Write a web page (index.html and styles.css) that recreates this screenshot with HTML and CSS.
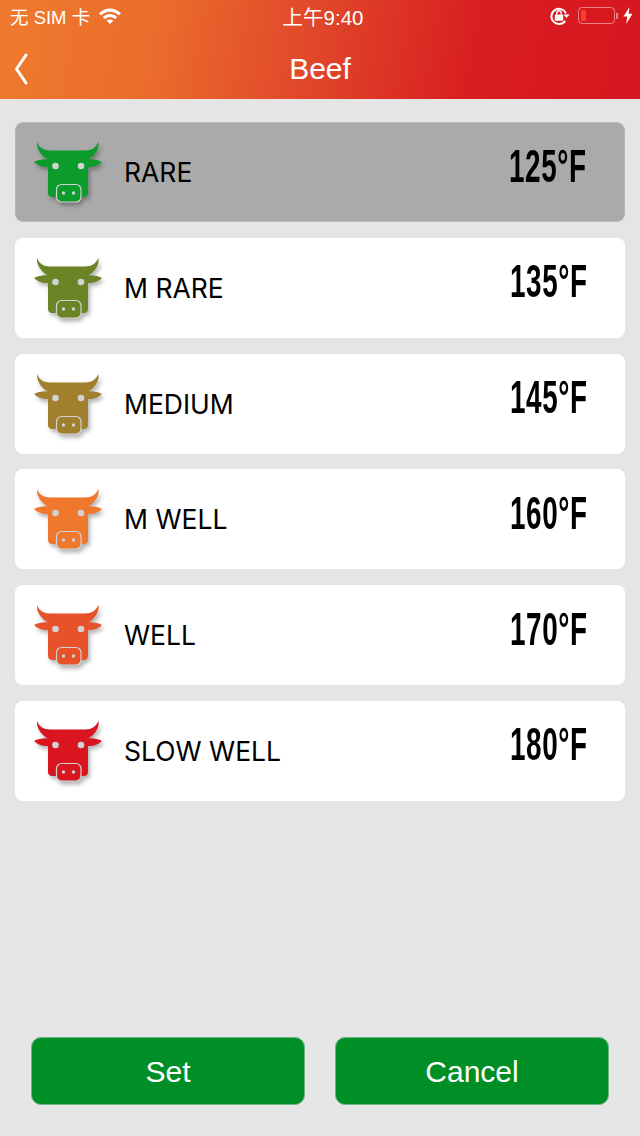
FILE: index.html
```html
<!DOCTYPE html>
<html lang="en">
<head>
  <meta charset="UTF-8" />
  <title>Beef</title>
  <link rel="stylesheet" href="styles.css">
</head>
<body>

<svg class="defs" width="0" height="0">
  <symbol id="cow" viewBox="0 0 70 64">
    <path fill="currentColor" d="M3 2 C5 7 9 10.5 16 10.5 L51 10.5 C58 10.5 62 7 64.5 2 C65.5 8 62 15 54 19.5 C59 19 64 20 68 22 C64 26 59 27.5 54 27 L54 53 C54 55.5 52 57 50 57 L18 57 C16 57 14 55.5 14 53 L14 27 C9 27.5 4 26 0 22 C4 20 9 19 14 19.5 C6 15 2.5 8 3 2 Z"/>
    <circle class="cow-eye" cx="21.5" cy="26" r="3.3"/>
    <circle class="cow-eye" cx="47" cy="26" r="3.3"/>
    <rect fill="currentColor" class="cow-snout" x="22.5" y="44.5" width="24.5" height="17.5" rx="5"/>
    <circle class="cow-eye" cx="29.5" cy="53" r="1.7"/>
    <circle class="cow-eye" cx="39.5" cy="53" r="1.7"/>
  </symbol>
</svg>

<header class="header">
  <div class="status">
    <div class="status-left">
      <span>无 SIM 卡</span>
      <svg class="wifi" viewBox="0 0 22 16" width="22" height="16">
        <path d="M0 5.2 C6.5 -1.2 15.5 -1.2 22 5.2 L19.8 7.5 C14.5 2.6 7.5 2.6 2.2 7.5 Z"/>
        <path d="M3.8 9 C8 5 14 5 18.2 9 L16 11.2 C12.8 8.4 9.2 8.4 6 11.2 Z"/>
        <path d="M7.6 12.6 C9.6 11 12.4 11 14.4 12.6 L11 16 Z"/>
      </svg>
    </div>
    <div class="status-time">上午9:40</div>
    <div class="status-right">
      <svg class="lock" viewBox="0 0 20 18" width="20" height="18">
        <path class="lock-ring" d="M15.2 13.8 A7.6 7.6 0 1 1 16 6.4"/>
        <path d="M13.4 7.4 L19.6 7.4 L16.5 11 Z"/>
        <rect x="4.8" y="7.4" width="8.4" height="6.4" rx="1"/>
        <path class="lock-ring thin" d="M6.8 7.6 V6 A2.2 2.2 0 0 1 11.2 6 V7.6"/>
      </svg>
      <div class="battery"><div class="battery-level"></div></div>
      <div class="battery-tip"></div>
      <svg class="bolt" viewBox="0 0 10 17" width="10" height="17">
        <path d="M6.5 0 L0.5 9.6 L4.3 9.6 L3.2 17 L9.5 6.8 L5.6 6.8 Z"/>
      </svg>
    </div>
  </div>
  <div class="nav">
    <svg class="back" viewBox="0 0 14 32" width="14" height="32">
      <path d="M12 2 L2.5 16 L12 30"/>
    </svg>
    <div class="nav-title">Beef</div>
  </div>
</header>

<main class="list">
  <div class="row selected">
    <svg class="cow c1"><use href="#cow"/></svg>
    <div class="name">RARE</div>
    <div class="temp"><span>125°F</span></div>
  </div>
  <div class="row">
    <svg class="cow c2"><use href="#cow"/></svg>
    <div class="name">M RARE</div>
    <div class="temp"><span>135°F</span></div>
  </div>
  <div class="row">
    <svg class="cow c3"><use href="#cow"/></svg>
    <div class="name">MEDIUM</div>
    <div class="temp"><span>145°F</span></div>
  </div>
  <div class="row">
    <svg class="cow c4"><use href="#cow"/></svg>
    <div class="name">M WELL</div>
    <div class="temp"><span>160°F</span></div>
  </div>
  <div class="row">
    <svg class="cow c5"><use href="#cow"/></svg>
    <div class="name">WELL</div>
    <div class="temp"><span>170°F</span></div>
  </div>
  <div class="row">
    <svg class="cow c6"><use href="#cow"/></svg>
    <div class="name">SLOW WELL</div>
    <div class="temp"><span>180°F</span></div>
  </div>
</main>

<footer class="actions">
  <button class="btn">Set</button>
  <button class="btn">Cancel</button>
</footer>

</body>
</html>
```

FILE: styles.css
```css
html, body {
  margin: 0;
  padding: 0;
}
body {
  width: 640px;
  height: 1136px;
  overflow: hidden;
  display: flex;
  flex-direction: column;
  background: #e5e5e5;
  font-family: Inter, "Noto Sans CJK SC", sans-serif;
}
.defs {
  position: absolute;
}

/* header */
.header {
  height: 99px;
  background: linear-gradient(100deg, #ef7a2e 0%, #eb6d2c 24%, #e0452a 50%, #d81e20 74%, #d7161f 100%);
  color: white;
}
.status {
  height: 31px;
  display: grid;
  grid-template-columns: 1fr auto 1fr;
  align-items: center;
  font-family: "Liberation Sans", "Noto Sans CJK SC", sans-serif;
  font-size: 20.5px;
}
.status-left {
  display: flex;
  align-items: center;
  gap: 9px;
  padding-left: 10px;
  font-size: 18.5px;
}
.status-time {
  padding-left: 6px;
}
.status-right {
  display: flex;
  align-items: center;
  justify-content: flex-end;
  padding-right: 7px;
}
.wifi, .bolt {
  fill: white;
}
.lock {
  fill: white;
  margin-right: 8px;
}
.lock-ring {
  fill: none;
  stroke: white;
  stroke-width: 2;
}
.lock-ring.thin {
  stroke-width: 1.4;
}
.battery {
  width: 37px;
  height: 17px;
  box-sizing: border-box;
  border: 1px solid rgba(255,255,255,0.45);
  border-radius: 4px;
  padding: 2px;
}
.battery-level {
  width: 5px;
  height: 100%;
  background: #ff3b30;
  border-radius: 1px;
}
.battery-tip {
  width: 2px;
  height: 6px;
  margin-left: 1px;
  margin-right: 5px;
  background: rgba(255,255,255,0.45);
}
.nav {
  height: 68px;
  display: flex;
  align-items: center;
  justify-content: center;
  position: relative;
}
.back {
  position: absolute;
  left: 14px;
  top: 22px;
  fill: none;
  stroke: white;
  stroke-width: 3;
  stroke-linecap: round;
  stroke-linejoin: round;
}
.nav-title {
  font-family: "Liberation Sans", sans-serif;
  font-size: 30px;
  margin-top: 7px;
}

/* list */
.list {
  display: flex;
  flex-direction: column;
  gap: 15.8px;
  margin: 23px 15px 0;
}
.row {
  height: 100px;
  box-sizing: border-box;
  display: flex;
  align-items: center;
  background: white;
  border-radius: 8px;
}
.row.selected {
  background: #aaaaaa;
  border: 1px solid #b9b9b9;
}
.cow {
  width: 70px;
  height: 64px;
  margin-left: 19px;
  margin-right: 20px;
  filter: drop-shadow(2px 3px 2px rgba(0,0,0,0.3));
}
.row.selected .cow {
  margin-left: 18px;
}
.cow-eye {
  fill: #d2d2d2;
}
.cow-snout {
  stroke: #d2d2d2;
  stroke-width: 1.2;
}
.c1 { color: #0c9c2b; }
.c2 { color: #6b8425; }
.c3 { color: #a0802c; }
.c4 { color: #f0782d; }
.c5 { color: #e8522a; }
.c6 { color: #d9161f; }
.name {
  flex: 1;
  font-size: 26.5px;
  color: #000;
}
.temp {
  width: 115px;
  font-family: "Liberation Sans", sans-serif;
  font-weight: bold;
  font-size: 46px;
  letter-spacing: 1px;
  color: #000;
  margin-top: -13px;
}
.temp span {
  display: inline-block;
  transform: scaleX(0.605);
  transform-origin: left center;
  white-space: nowrap;
}

/* buttons */
.actions {
  margin-top: auto;
  padding: 0 31px 31px;
  display: flex;
  justify-content: space-between;
}
.btn {
  width: 274px;
  height: 68px;
  padding-top: 2px;
  background: #008f26;
  color: white;
  border: 1px solid #6fb585;
  border-radius: 10px;
  font-family: "Liberation Sans", sans-serif;
  font-size: 30px;
}
```
